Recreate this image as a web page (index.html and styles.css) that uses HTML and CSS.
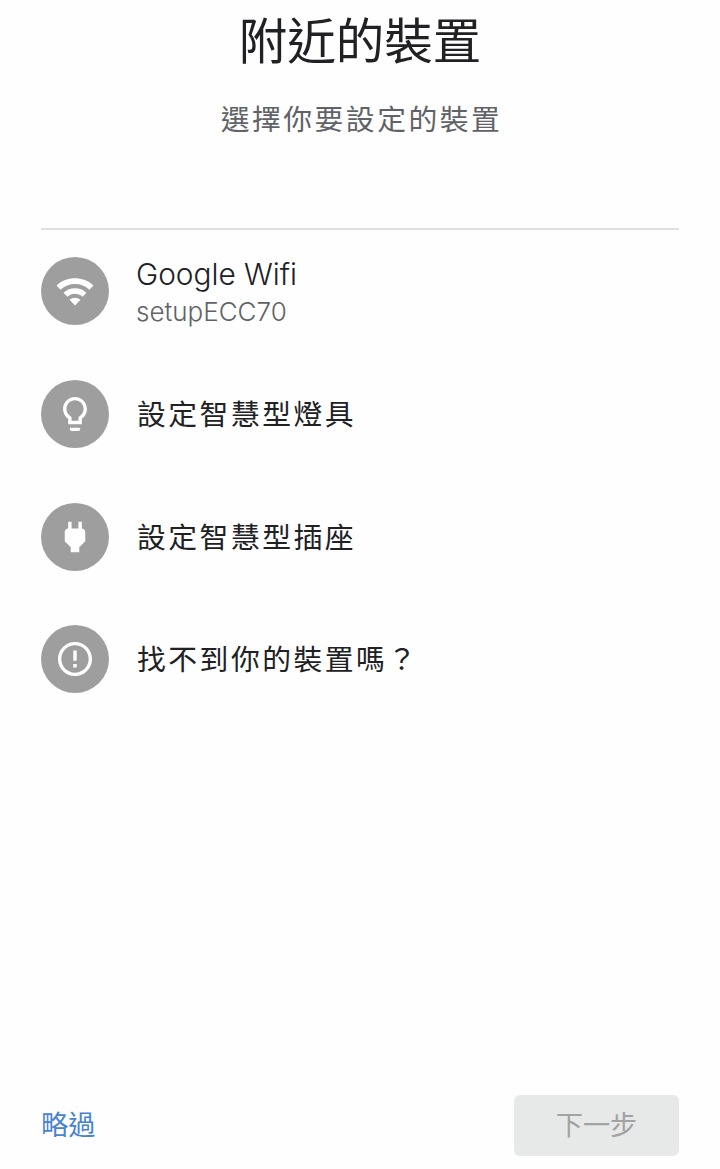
FILE: index.html
```
<!DOCTYPE html>
<html lang="zh-Hant">
<head>
<meta charset="utf-8">
<title>附近的裝置</title>
<link rel="stylesheet" href="styles.css">
</head>
<body>
<main class="screen">
  <header class="header">
    <h1 class="title">附近的裝置</h1>
    <p class="subtitle">選擇你要設定的裝置</p>
  </header>
  <ul class="devices">
    <li class="device">
      <span class="badge"><svg class="icon" viewBox="-.3 -.3 24.6 24.6"><path d="M1.2 8.8l2.3 2.5c4.7-4.5 12.3-4.5 17 0l2.3-2.5C16.8 3.2 7.2 3.2 1.2 8.8zM5.3 13l2.2 2.3c2.5-2.3 6.5-2.3 9 0l2.2-2.3c-3.8-3.5-9.6-3.5-13.4 0zM8.8 17.1L12 20.5l3.2-3.4c-1.8-1.6-4.6-1.6-6.4 0z"/></svg></span>
      <div class="label latin"><span class="name">Google Wifi</span><span class="ssid">setupECC70</span></div>
    </li>
    <li class="device">
      <span class="badge"><svg class="icon" viewBox="-.3 -.3 24.6 24.6"><path d="M9 21c0 .55.45 1 1 1h4c.55 0 1-.45 1-1v-1H9v1zm3-19C8.14 2 5 5.14 5 9c0 2.38 1.19 4.47 3 5.74V18h8v-3.26c1.81-1.27 3-3.36 3-5.74 0-3.86-3.14-7-7-7zm2.85 11.1l-.85.6V16h-4v-2.3l-.85-.6C7.8 12.16 7 10.63 7 9c0-2.76 2.24-5 5-5s5 2.24 5 5c0 1.63-.8 3.16-2.15 4.1z"/></svg></span>
      <span class="label">設定智慧型燈具</span>
    </li>
    <li class="device">
      <span class="badge"><svg class="icon" viewBox="-.3 -.3 24.6 24.6"><path d="M16.01 7L16 3h-2v4h-4V3H8v4h-.01C7 6.99 6 7.99 6 8.99v5.49L9.5 18v3h5v-3l3.5-3.51v-5.5c0-1-1-2-1.99-1.99z"/></svg></span>
      <span class="label">設定智慧型插座</span>
    </li>
    <li class="device">
      <span class="badge"><svg class="icon" viewBox="-.3 -.3 24.6 24.6"><path d="M11 15h2v2h-2zm0-8h2v6h-2zm.99-5C6.47 2 2 6.48 2 12s4.47 10 9.99 10C17.52 22 22 17.52 22 12S17.52 2 11.99 2zM12 20c-4.42 0-8-3.58-8-8s3.58-8 8-8 8 3.58 8 8-3.58 8-8 8z"/></svg></span>
      <span class="label">找不到你的裝置嗎？</span>
    </li>
  </ul>
  <footer class="actions">
    <button class="skip">略過</button>
    <button class="next" disabled>下一步</button>
  </footer>
</main>
</body>
</html>
```
FILE: styles.css
```
* { box-sizing: border-box; }

body {
  margin: 0;
  background: #fefefe;
  color: #202124;
  font-family: "Noto Sans CJK TC", sans-serif;
}

.screen {
  display: flex;
  flex-direction: column;
  height: 1169px;
  padding: 2px 41px 13px;
}

.header {
  height: 228px;
  border-bottom: 2px solid #dfe1e1;
  text-align: center;
}

.title {
  margin: 0;
  font-size: 48.5px;
  font-weight: 400;
  line-height: 72px;
}

.subtitle {
  margin: 22px 0 0;
  padding-left: 3px;
  color: #5f6368;
  font-size: 28.8px;
  letter-spacing: 2.5px;
  line-height: 44px;
}

.devices {
  flex: 1;
  margin: 0;
  padding: 27px 0 0;
  list-style: none;
}

.device {
  display: flex;
  align-items: center;
  gap: 28px;
  height: 68px;
  margin-bottom: 54.8px;
}

.badge {
  display: flex;
  flex: none;
  align-items: center;
  justify-content: center;
  width: 68px;
  height: 68px;
  border-radius: 50%;
  background: #9e9e9e;
}

.icon {
  width: 42px;
  height: 42px;
  fill: #fff;
}

.label {
  padding-bottom: 2px;
  font-size: 28.8px;
  letter-spacing: 2.5px;
  line-height: 44px;
  white-space: nowrap;
}

.latin {
  display: flex;
  flex-direction: column;
  margin-left: -1px;
  padding: 4px 0 0;
  font-family: Inter, "Liberation Sans", sans-serif;
  font-weight: 300;
  letter-spacing: 0;
}

.name {
  font-size: 29.8px;
  line-height: 38px;
}

.ssid {
  color: #5f6368;
  font-size: 26px;
  line-height: 38px;
}

.actions {
  display: flex;
  align-items: center;
  justify-content: space-between;
  height: 61px;
}

.skip,
.next {
  border: 0;
  font: 400 27.2px/40px "Noto Sans CJK TC", sans-serif;
}

.skip {
  padding: 0 0 5px;
  background: none;
  color: #4683d0;
}

.next {
  width: 165px;
  height: 61px;
  padding: 0 0 5px;
  border-radius: 6px;
  background: #e7e9e8;
  color: #a0a3a2;
}
```
